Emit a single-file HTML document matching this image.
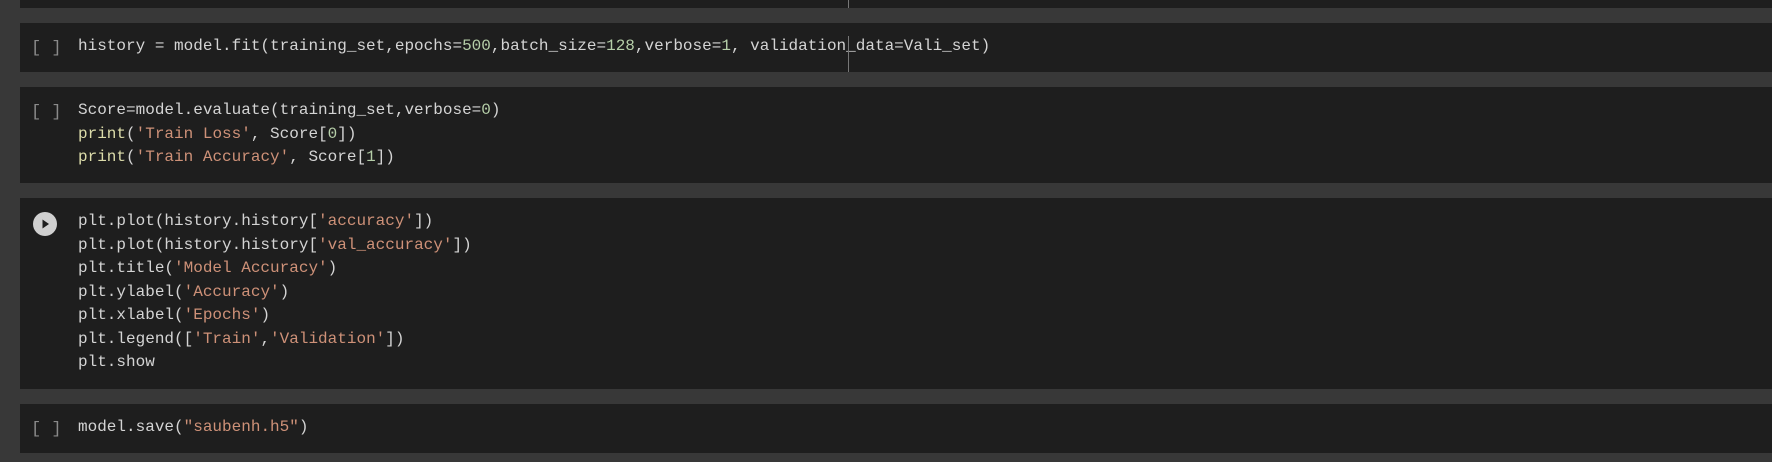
<!DOCTYPE html>
<html><head><style>
html,body{margin:0;padding:0;width:1772px;height:462px;background:#383838;overflow:hidden}
.cell{position:absolute;left:20px;right:0;background:#1e1e1e}
.code{position:absolute;left:78px;font-family:"Liberation Mono",monospace;font-size:16px;line-height:23.5px;color:#d4d4d4;white-space:pre}
.br{position:absolute;left:31px;font-family:"Liberation Mono",monospace;font-size:17px;color:#8a8a8a;white-space:pre}
.s{color:#ce9178}.n{color:#b5cea8}.f{color:#dcdcaa}
</style></head><body>
<div class="cell" style="top:0;height:8px"></div>
<div style="position:absolute;left:848px;top:0;width:1px;height:8px;background:#777"></div>
<div class="cell" style="top:23px;height:49px"></div>
<div class="br" style="top:39px">[ ]</div>
<div class="code" style="top:35px">history = model.fit(training_set,epochs=<span class="n">500</span>,batch_size=<span class="n">128</span>,verbose=<span class="n">1</span>, validation_data=Vali_set)</div>
<div style="position:absolute;left:848px;top:36px;width:1px;height:36px;background:#777"></div>
<div class="cell" style="top:87px;height:96px"></div>
<div class="br" style="top:103px">[ ]</div>
<div class="code" style="top:99px">Score=model.evaluate(training_set,verbose=<span class="n">0</span>)
<span class="f">print</span>(<span class="s">'Train Loss'</span>, Score[<span class="n">0</span>])
<span class="f">print</span>(<span class="s">'Train Accuracy'</span>, Score[<span class="n">1</span>])</div>
<div class="cell" style="top:198px;height:191px"></div>
<svg style="position:absolute;left:33px;top:212px" width="24" height="24"><circle cx="12" cy="12" r="12" fill="#d0d0d0"/><path d="M9.5 7.5L16 12L9.5 16.5Z" fill="#1e1e1e"/></svg>
<div class="code" style="top:210px">plt.plot(history.history[<span class="s">'accuracy'</span>])
plt.plot(history.history[<span class="s">'val_accuracy'</span>])
plt.title(<span class="s">'Model Accuracy'</span>)
plt.ylabel(<span class="s">'Accuracy'</span>)
plt.xlabel(<span class="s">'Epochs'</span>)
plt.legend([<span class="s">'Train'</span>,<span class="s">'Validation'</span>])
plt.show</div>
<div class="cell" style="top:404px;height:49px"></div>
<div class="br" style="top:420px">[ ]</div>
<div class="code" style="top:416px">model.save(<span class="s">"saubenh.h5"</span>)</div>
</body></html>
